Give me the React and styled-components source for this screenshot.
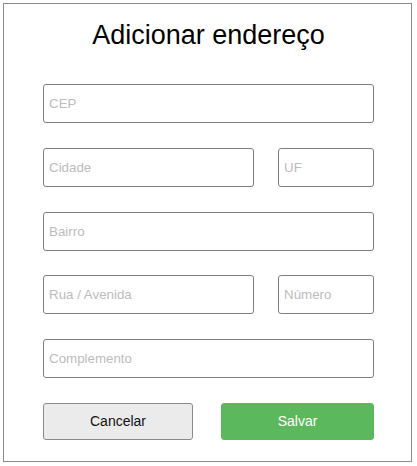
import React from "react";
import styled, { createGlobalStyle } from "styled-components";

const Global = createGlobalStyle`
  html, body { margin: 0; padding: 0; background: #ffffff; }
  body { font-family: "Liberation Sans", Arial, sans-serif; }
  * { box-sizing: border-box; }
`;

const Card = styled.div`
  margin: 3px 0 0 3px;
  width: 409px;
  height: 459px;
  border: 1px solid #8a8a8a;
  background: #fff;
  padding: 16px 0 0 39px;
  display: flex;
  flex-direction: column;
`;

const Title = styled.h1`
  margin: 0 0 33px 0;
  width: 331px;
  text-align: center;
  font-weight: normal;
  font-size: 27px;
  line-height: 31px;
  color: #000;
`;

const Form = styled.form`
  width: 331px;
  display: flex;
  flex-direction: column;
  gap: 24.8px;
`;

const Row = styled.div`
  display: flex;
  gap: ${(p) => p.$gap || 24}px;
`;

const Input = styled.input`
  display: block;
  width: ${(p) => p.$w || 331}px;
  flex: none;
  height: 39px;
  border: 1px solid #7f7f7f;
  border-radius: 3px;
  padding: 0 5px;
  margin: 0;
  font-family: "Liberation Sans", Arial, sans-serif;
  font-size: 13.333px;
  color: #333;
  outline: none;
  background: #fff;
  &::placeholder { color: #bcbcbc; }
`;

const Button = styled.button`
  width: ${(p) => p.$w}px;
  height: 37px;
  margin: 0;
  border-radius: 3px;
  font-family: "Liberation Sans", Arial, sans-serif;
  font-size: 14px;
  cursor: pointer;
  border: 1px solid ${(p) => (p.$primary ? "#5cb85c" : "#8a8a8a")};
  background: ${(p) => (p.$primary ? "#5cb85c" : "#ebebeb")};
  color: ${(p) => (p.$primary ? "#fff" : "#111")};
`;

export default function App() {
  return (
    <>
      <Global />
      <Card>
        <Title>Adicionar endereço</Title>
        <Form onSubmit={(e) => e.preventDefault()}>
          <Input placeholder="CEP" />
          <Row>
            <Input $w={211} placeholder="Cidade" />
            <Input $w={96} placeholder="UF" />
          </Row>
          <Input placeholder="Bairro" />
          <Row>
            <Input $w={211} placeholder="Rua / Avenida" />
            <Input $w={96} placeholder="Número" />
          </Row>
          <Input placeholder="Complemento" />
          <Row $gap={28}>
            <Button type="button" $w={150}>Cancelar</Button>
            <Button type="submit" $primary $w={153}>Salvar</Button>
          </Row>
        </Form>
      </Card>
    </>
  );
}
